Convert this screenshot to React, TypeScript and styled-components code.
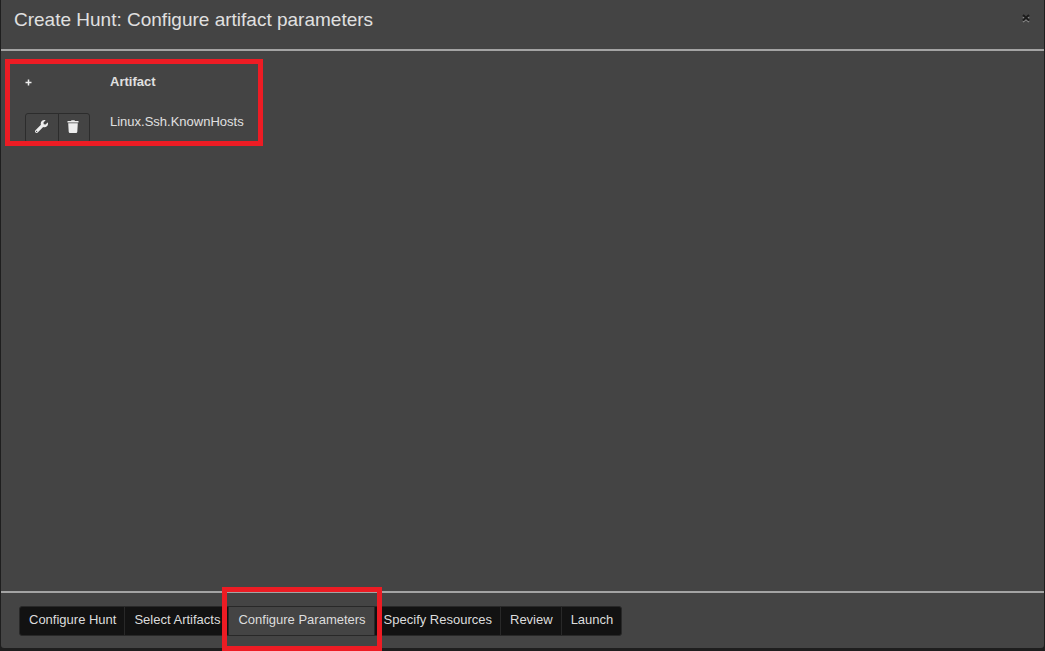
import React from "react";
import styled, { createGlobalStyle, css } from "styled-components";

const GlobalStyle = createGlobalStyle`
  * { box-sizing: border-box; }
  body {
    margin: 0;
    background: #1e1e1e;
    color: #e0e0e0;
    font-family: "Liberation Sans", Arial, Helvetica, sans-serif;
    font-size: 13px;
    line-height: 20px;
  }
`;

const Page = styled.div`
  display: flex;
  min-height: 100vh;
  padding: 0 1px 3px;
  overflow: hidden;
`;

const Dialog = styled.section`
  display: flex;
  flex: 1;
  flex-direction: column;
  min-width: 0;
  background: #444444;
  border-radius: 0 0 3px 3px;
`;

const Header = styled.header`
  display: flex;
  justify-content: space-between;
  align-items: flex-start;
  padding: 8px 13px 17px;
  border-bottom: 2px solid #a4a4a4;
`;

const Title = styled.h1`
  margin: 0;
  font-size: 19px;
  font-weight: 400;
  line-height: 24px;
`;

const CloseButton = styled.button`
  display: flex;
  margin: 5px 0 0;
  padding: 0;
  border: 0;
  background: none;
  color: #1c1c1c;
`;

const Body = styled.main`
  flex: 1;
  padding: 21px 24px;
`;

const Highlight = styled.span<{ $inset: string }>`
  position: absolute;
  inset: ${(p) => p.$inset};
  border: 5px solid #ed1c24;
  pointer-events: none;
`;

const TableArea = styled.div`
  position: relative;
  width: max-content;
`;

const ArtifactTable = styled.table`
  border-collapse: collapse;

  th,
  td {
    padding: 0;
    text-align: left;
    vertical-align: top;
  }

  th {
    height: 40px;
  }

  th:first-child {
    width: 85px;
  }
`;

const AddButton = styled.button`
  display: flex;
  margin: 7px 0 0;
  padding: 0;
  border: 0;
  background: none;
  color: #eeeeee;
`;

const RowActions = styled.div`
  display: flex;
  margin-top: 1px;
`;

const IconButton = styled.button`
  display: flex;
  align-items: center;
  justify-content: center;
  width: 34px;
  height: 30px;
  padding: 0 2px 4px 0;
  border: 1px solid #2c2c2c;
  border-radius: 3px 0 0 3px;
  background: #444444;
  color: #eeeeee;

  & + & {
    width: 32px;
    margin-left: -1px;
    border-radius: 0 3px 3px 0;
  }
`;

const Footer = styled.footer`
  padding: 13px 18px 12px;
  border-top: 2px solid #a4a4a4;
`;

const Steps = styled.nav`
  display: flex;
`;

const StepButton = styled.button<{ $active?: boolean }>`
  position: relative;
  height: 30px;
  padding: 0 8px 2px 9px;
  border: 1px solid #282828;
  background: #121212;
  color: #dddddd;
  font: inherit;
  white-space: nowrap;

  & + & {
    margin-left: -1px;
  }

  &:first-child {
    border-radius: 3px 0 0 3px;
  }

  &:last-child {
    border-radius: 0 3px 3px 0;
  }

  ${(p) =>
    p.$active &&
    css`
      z-index: 1;
      background: #444444;
    `}
`;

const steps = [
  "Configure Hunt",
  "Select Artifacts",
  "Configure Parameters",
  "Specify Resources",
  "Review",
  "Launch",
];
const currentStep = "Configure Parameters";

const CloseIcon = () => (
  <svg width="10" height="10" viewBox="0 0 10 10" aria-hidden="true">
    <path d="M2 4l6 5M8 4L2 9" stroke="#8a8a8a" strokeWidth="1.600" />
    <path d="M2 2l6 5.500M8 2L2 7.500" stroke="currentColor" strokeWidth="2" />
  </svg>
);

const PlusIcon = () => (
  <svg width="7" height="7" viewBox="0 0 7 7" aria-hidden="true">
    <path d="M3.5 0.5v6M0.5 3.5h6" stroke="currentColor" strokeWidth="1.5" />
  </svg>
);

const WrenchIcon = () => (
  <svg width="13" height="13" viewBox="0 0 512 512" aria-hidden="true">
    <path
      fill="currentColor"
      d="M507.73 109.1c-2.24-9.03-13.54-12.09-20.12-5.51l-74.36 74.36-67.88-11.31-11.31-67.88 74.36-74.36c6.62-6.62 3.43-17.9-5.66-20.16-47.38-11.74-99.55.91-136.58 37.93-39.64 39.64-50.55 97.1-34.05 147.2L18.74 402.76c-24.99 24.99-24.99 65.51 0 90.5 24.99 24.99 65.51 24.99 90.5 0l213.21-213.21c50.12 16.71 107.47 5.68 147.37-34.22 37.07-37.07 49.7-89.32 37.91-136.73zM64 472c-13.25 0-24-10.75-24-24 0-13.26 10.75-24 24-24s24 10.74 24 24c0 13.25-10.75 24-24 24z"
    />
  </svg>
);

const TrashIcon = () => (
  <svg width="12" height="13" viewBox="0 0 12 13" aria-hidden="true">
    <path
      fill="currentColor"
      d="M.5 1H4l.5-.8h3L8 1h3.500v1.500H.500zM1.200 3.300h9.600l-.5 8.500q-.1 1.200-1.300 1.200H3q-1.200 0-1.300-1.200z"
    />
  </svg>
);

export default function App() {
  return (
    <>
      <GlobalStyle />
      <Page>
        <Dialog role="dialog" aria-labelledby="wizard-title">
          <Header>
            <Title id="wizard-title">Create Hunt: Configure artifact parameters</Title>
            <CloseButton type="button" aria-label="Close">
              <CloseIcon />
            </CloseButton>
          </Header>
          <Body>
            <TableArea>
              <ArtifactTable>
                <thead>
                  <tr>
                    <th>
                      <AddButton type="button" aria-label="Add artifact">
                        <PlusIcon />
                      </AddButton>
                    </th>
                    <th>Artifact</th>
                  </tr>
                </thead>
                <tbody>
                  <tr>
                    <td>
                      <RowActions>
                        <IconButton type="button" aria-label="Configure artifact">
                          <WrenchIcon />
                        </IconButton>
                        <IconButton type="button" aria-label="Remove artifact">
                          <TrashIcon />
                        </IconButton>
                      </RowActions>
                    </td>
                    <td>Linux.Ssh.KnownHosts</td>
                  </tr>
                </tbody>
              </ArtifactTable>
              <Highlight $inset="-13px -19px -3px -20px" />
            </TableArea>
          </Body>
          <Footer>
            <Steps aria-label="Wizard steps">
              {steps.map((step) => {
                const active = step === currentStep;
                return (
                  <StepButton
                    key={step}
                    type="button"
                    $active={active}
                    aria-current={active ? "step" : undefined}
                  >
                    {step}
                    {active && <Highlight $inset="-20px -8px -16px -7px" />}
                  </StepButton>
                );
              })}
            </Steps>
          </Footer>
        </Dialog>
      </Page>
    </>
  );
}
